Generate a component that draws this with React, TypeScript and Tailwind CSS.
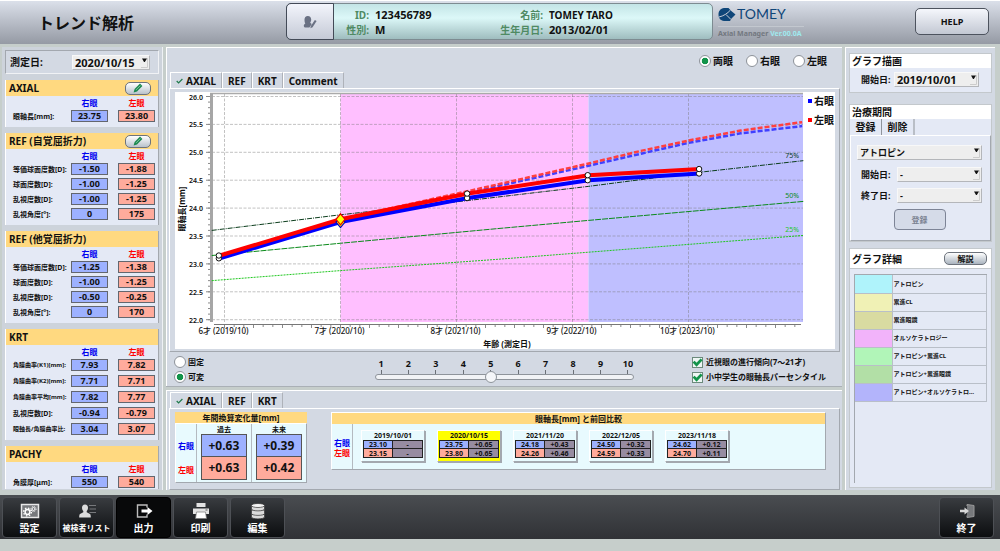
import { ReactNode } from "react";
import clsx from "clsx";

type Measurement = {
  label: string;
  right: string;
  left: string;
  fine?: boolean;
};

type MeasurementGroup = {
  title: string;
  editable?: boolean;
  roomy?: boolean;
  rows: Measurement[];
};

const groups: MeasurementGroup[] = [
  {
    title: "AXIAL",
    editable: true,
    rows: [{ label: "眼軸長[mm]:", right: "23.75", left: "23.80" }],
  },
  {
    title: "REF (自覚屈折力)",
    editable: true,
    rows: [
      { label: "等価球面度数[D]:", right: "-1.50", left: "-1.88" },
      { label: "球面度数[D]:", right: "-1.00", left: "-1.25" },
      { label: "乱視度数[D]:", right: "-1.00", left: "-1.25" },
      { label: "乱視角度[°]:", right: "0", left: "175" },
    ],
  },
  {
    title: "REF (他覚屈折力)",
    rows: [
      { label: "等価球面度数[D]:", right: "-1.25", left: "-1.38" },
      { label: "球面度数[D]:", right: "-1.00", left: "-1.25" },
      { label: "乱視度数[D]:", right: "-0.50", left: "-0.25" },
      { label: "乱視角度[°]:", right: "0", left: "170" },
    ],
  },
  {
    title: "KRT",
    roomy: true,
    rows: [
      { label: "角膜曲率(K1)[mm]:", right: "7.93", left: "7.82", fine: true },
      { label: "角膜曲率(K2)[mm]:", right: "7.71", left: "7.71", fine: true },
      { label: "角膜曲率平均[mm]:", right: "7.82", left: "7.77", fine: true },
      { label: "乱視度数[D]:", right: "-0.94", left: "-0.79" },
      { label: "眼軸長/角膜曲率比:", right: "3.04", left: "3.07", fine: true },
    ],
  },
  {
    title: "PACHY",
    rows: [{ label: "角膜厚[μm]:", right: "550", left: "540" }],
  },
];

const visits = [
  { date: "2019/10/01", age: 5.96, right: 23.1, left: 23.15, dr: "-", dl: "-" },
  { date: "2020/10/15", age: 7, right: 23.75, left: 23.8, dr: "+0.65", dl: "+0.65", current: true },
  { date: "2021/11/20", age: 8.1, right: 24.18, left: 24.26, dr: "+0.43", dl: "+0.46" },
  { date: "2022/12/05", age: 9.14, right: 24.5, left: 24.59, dr: "+0.32", dl: "+0.33" },
  { date: "2023/11/18", age: 10.1, right: 24.62, left: 24.7, dr: "+0.12", dl: "+0.11" },
];

const treatments = [
  { name: "アトロピン", swatch: "bg-[#aff3fb]" },
  { name: "累進CL", swatch: "bg-[#f0f1b5]" },
  { name: "累進眼鏡", swatch: "bg-[#d9dba1]" },
  { name: "オルソケラトロジー", swatch: "bg-[#f2b3fa]" },
  { name: "アトロピン+累進CL", swatch: "bg-[#b1f5b8]" },
  { name: "アトロピン+累進眼鏡", swatch: "bg-[#b2dfa6]" },
  { name: "アトロピン+オルソケラトロ…", swatch: "bg-[#b3b4fb]" },
];

const raised = "border border-t-white border-l-white border-r-[#a3a8af] border-b-[#a3a8af]";

// ---- shared controls ----

const Select = ({
  id,
  value,
  label,
  className,
}: {
  id: string;
  value: string;
  label?: string;
  className?: string;
}) => (
  <div className={clsx("relative", className)}>
    <select
      id={id}
      aria-label={label}
      defaultValue={value}
      className="block h-[15px] w-full appearance-none border border-t-[#f8f8f8] border-l-[#f8f8f8] border-r-[#b4b6ba] border-b-[#b4b6ba] bg-[#eeeeee] pl-[2px] leading-none font-bold"
    >
      <option>{value}</option>
    </select>
    <svg viewBox="0 0 7 12" className="pointer-events-none absolute top-[2px] right-[2px] h-3 w-[7px]">
      <path d="M1 1.5h5L3.8 5H3z" fill="#111" />
      <path d="M0 10.5h6.5V1" fill="none" stroke="#ccc" />
    </svg>
  </div>
);

const Radio = ({ name, label, checked }: { name: string; label: string; checked?: boolean }) => (
  <label className="flex h-3 items-center gap-[2px]">
    <input
      type="radio"
      name={name}
      defaultChecked={checked}
      className="size-3 appearance-none rounded-full border border-[#8d9299] bg-white checked:bg-[radial-gradient(circle_closest-side,#12934a_60%,#ffffff_72%)]"
    />
    {label}
  </label>
);

const Check = ({ label }: { label: string }) => (
  <label className="flex h-3 items-center gap-[3px]">
    <span className="relative size-[11px]">
      <input
        type="checkbox"
        defaultChecked
        className="peer block size-[11px] appearance-none border border-[#6c8a7c] bg-[#eef6f4]"
      />
      <svg viewBox="0 0 11 11" className="pointer-events-none absolute inset-0 hidden peer-checked:block">
        <path d="M1.6 4.6 4.6 7.8 9.6 2.4" fill="none" stroke="#12934a" strokeWidth="2.8" />
      </svg>
    </span>
    {label}
  </label>
);

const Tabs = ({ items }: { items: string[] }) => (
  <div role="tablist" className="flex h-4 pl-[3px] text-[10px]">
    {items.map((item, i) => (
      <button
        key={item}
        role="tab"
        aria-selected={i === 0}
        className={clsx(
          "flex items-center border-t border-l border-t-white border-l-white border-r border-r-[#aeb2b9] bg-[#d3d9e3] px-[5px] pt-px font-bold",
          i === 0 && "gap-[3px]"
        )}
      >
        {i === 0 && (
          <svg viewBox="0 0 7 6" className="h-[6px] w-[7px]">
            <path d="M.7 3 2.6 5 6.4 1" fill="none" stroke="#1f7a4c" strokeWidth="1.2" />
          </svg>
        )}
        {item}
      </button>
    ))}
  </div>
);

// ---- header ----

const Field = ({ label, children, className }: { label: string; children: ReactNode; className?: string }) => (
  <div className={clsx("flex items-center gap-[6px]", className)}>
    <dt className="w-[46px] text-right text-[10px] text-[#4f8a63]">{label}</dt>
    <dd>{children}</dd>
  </div>
);

const Header = () => (
  <header className="flex h-11 items-start border-t border-white bg-linear-to-b from-[#dbe0ea] to-[#959aa4]">
    <h1 className="w-[286px] self-center pl-[38px] text-[16px]">トレンド解析</h1>
    <div className="mt-[2px] flex h-[37px] w-[427px] rounded-[5px] border border-[#7d8b91] bg-linear-to-b from-[#c3e4e6] via-[#dcf8f8] via-40% to-[#9fbdbf]">
      <button
        aria-label="患者情報の編集"
        className="-m-px flex w-12 items-center justify-center rounded-l-[5px] border border-[#434a57] bg-linear-to-b from-[#f3f5fc] to-[#c5cad6]"
      >
        <svg viewBox="0 0 14 14" className="size-[14px]" fill="#6a7183">
          <path d="M4.8 1C7 1 8.200 2.500 8.200 4.600c0 1.500-.4 2.400-1 3.200.5.500 1.200.8 1.600 1.200L6.400 12.600H2.600C1.400 12.600.8 11.800.8 10.800c0-1.100.7-1.700 1.500-2.300C1.700 7.600 1.500 6.200 1.500 4.600 1.500 2.500 2.700 1 4.800 1z" />
          <path d="m11.900 5 1.700 1.100-4 6.100-2.200 1 .4-2.200z" />
        </svg>
      </button>
      <dl className="grid grow grid-cols-[164px_1fr] grid-rows-[15px_15px] content-start pt-[3px] text-[11px]">
        <Field label="ID:" className="-ml-[10px]">123456789</Field>
        <Field label="名前:"><span className="text-[10px]">TOMEY TARO</span></Field>
        <Field label="性別:" className="-ml-[10px]">M</Field>
        <Field label="生年月日:">2013/02/01</Field>
      </dl>
    </div>
    <div className="mt-[5px] ml-[5px] w-[86px]">
      <div className="flex h-[21px] items-center gap-px border-b border-[#c3c8cf] pb-1 text-[#0f4679]">
        <svg viewBox="0 0 18 15" className="h-[15px] w-[18px]">
          <path d="M6 1h4.500l2.800 3L17.500 7.500 13.500 11.500 12 14H6C2.500 13.500.5 11 .5 7.500S2.500 1.500 6 1z" fill="#0f4679" />
          <path d="M1 10C5.500 9 9.500 6.500 12.500 3M8 7.500 13 12.500" fill="none" stroke="#c7ccd6" />
        </svg>
        <span className="font-['Lato','Noto_Sans',sans-serif] text-[14px] font-normal">TOMEY</span>
      </div>
      <p className="pt-[3px] text-[7px] whitespace-nowrap text-[#737880]">
        Axial Manager <span className="text-[#9fe9ee]">Ver.00.0A</span>
      </p>
    </div>
    <button className="mt-[7px] mr-[11px] ml-auto h-[27px] w-[74px] rounded-[5px] border border-[#4d535e] bg-linear-to-b from-[#f5f7fc] to-[#c3c8d3] text-[9px] font-bold">
      HELP
    </button>
  </header>
);

// ---- left column ----

const MeasurementCard = ({ title, editable, roomy, rows }: MeasurementGroup) => (
  <section className={clsx("bg-[#e4e9f5] pb-[5px] last:pb-px", raised, "border-y-0")}>
    <div className="flex h-4 items-center justify-between bg-[#ffd980] pr-[7px] pl-[3px]">
      <h2 className="text-[10px]">{title}</h2>
      {editable && (
        <button
          aria-label={`${title} 編集`}
          className="flex h-[13px] w-[26px] items-center justify-center rounded-[5px] border border-[#6d737c] bg-linear-to-b from-white to-[#b9c2cb]"
        >
          <svg viewBox="0 0 10 10" className="size-[10px]">
            <path d="M.6 9.400 1.600 6 7 .6 9.400 3 4 8.400z" fill="#1d8a50" />
            <path d="M3 6.900 7.300 2.600" stroke="#a9dcbf" strokeWidth=".7" />
          </svg>
        </button>
      )}
    </div>
    <table className="block pr-[3px] pl-[7px]">
      <thead className="block">
        <tr className="grid h-[14px] grid-cols-[1fr_37px_37px] items-center gap-x-[10px] text-[8px]">
          <td />
          <th className="text-[#0000f0]">右眼</th>
          <th className="text-[#ff0000]">左眼</th>
        </tr>
      </thead>
      <tbody className={clsx("grid", roomy ? "gap-1" : "gap-[3px]")}>
        {rows.map((row) => (
          <tr key={row.label} className="grid h-3 grid-cols-[1fr_37px_37px] items-center gap-x-[10px] text-center text-[9px]">
            <th className={clsx("w-0 text-left whitespace-nowrap", row.fine ? "text-[6px]" : "text-[7px]")}>
              {row.label}
            </th>
            <td className="h-3 border border-[#63666e] bg-[#9db1ff] leading-[10px]">{row.right}</td>
            <td className="h-3 border border-[#63666e] bg-[#ffab9c] leading-[10px]">{row.left}</td>
          </tr>
        ))}
      </tbody>
    </table>
  </section>
);

const Sidebar = () => (
  <aside className="flex w-[161px] shrink-0 flex-col gap-[6px] border-r border-r-[#eef1f4] bg-[#cdd3db] px-[3px] pt-[3px] pb-px">
    <div className="flex h-6 items-center border border-t-[#a3a8af] border-r-[#f0f2f5] border-b-[#f0f2f5] border-l-[#a3a8af] bg-[#d3d9e3] pl-1 text-[10px]">
      <label htmlFor="measured" className="w-[62px]">測定日:</label>
      <Select id="measured" value="2020/10/15" className="w-[78px] text-[11px]" />
    </div>
    {groups.map((group) => (
      <MeasurementCard key={group.title} {...group} />
    ))}
  </aside>
);

// ---- chart ----

const PLOT = { left: 37, right: 628, top: 2, bottom: 230 };
const px = (age: number) => 49.5 + (age - 6) * 116;
const py = (mm: number) => 4.5 + (26 - mm) * 55.8;
const line = (points: [number, number][]) => points.map(([a, v]) => `${px(a)},${py(v)}`).join(" ");

const ages = [6, 7, 8, 9, 10];
const lengths = [26, 25.5, 25, 24.5, 24, 23.5, 23, 22.5, 22];
const minorY = Array.from({ length: 41 }, (_, i) => 22 + i / 10);
const minorX = Array.from({ length: 60 }, (_, i) => 6 + i / 12).filter((a) => px(a) < PLOT.right);

const percentiles: { label: string; color: string; dash: string; points: [number, number][] }[] = [
  {
    label: "75%",
    color: "#0b3d1c",
    dash: "5 1 1 1",
    points: [[5.89, 23.6], [7, 23.88], [8.2, 24.16], [9.14, 24.39], [10, 24.62], [10.99, 24.85]],
  },
  {
    label: "50%",
    color: "#0a8a1a",
    dash: "6 1",
    points: [[5.89, 23.15], [7, 23.37], [8.34, 23.63], [9.14, 23.78], [10.99, 24.12]],
  },
  {
    label: "25%",
    color: "#1fc81f",
    dash: "2 1",
    points: [[5.89, 22.7], [7, 22.88], [8.34, 23.08], [9.14, 23.21], [10.99, 23.51]],
  },
];

const forecastRight: [number, number][] = [
  [7, 23.75], [8.2, 24.32], [9.14, 24.76], [9.6, 24.98], [10, 25.17], [10.45, 25.34], [10.98, 25.47],
];
const forecastLeft: [number, number][] = [
  [7, 23.8], [8.2, 24.35], [9.14, 24.8], [9.6, 25.03], [10, 25.21], [10.45, 25.39], [10.98, 25.54],
];

const Chart = () => (
  <svg viewBox="0 0 660 257" className="block w-full bg-white font-bold" fill="#111">
    <rect x={px(7)} y={PLOT.top} width={413.5 - px(7)} height={228} fill="#ffbfff" />
    <rect x={413.5} y={PLOT.top} width={PLOT.right - 413.5} height={228} fill="#bfbfff" />

    <g stroke="#777" strokeOpacity=".45" strokeDasharray="3 1.5">
      {lengths.map((v) => (
        <line key={v} x1={PLOT.left} x2={PLOT.right} y1={py(v)} y2={py(v)} />
      ))}
      {ages.map((a) => (
        <line key={a} x1={px(a)} x2={px(a)} y1={PLOT.top} y2={PLOT.bottom} />
      ))}
    </g>

    <g stroke="#8a8a8a">
      <path d="M35 1.5H628" stroke="#aaa" strokeWidth="1.5" />
      <path d="M36.5 1V230" stroke="#a6a6a6" strokeWidth="3" />
      <path d="M39 232.5H626" stroke="#777" />
      {minorY.map((v) => (
        <line key={v} x1={33} x2={35} y1={py(v)} y2={py(v)} />
      ))}
      {lengths.map((v) => (
        <line key={v} x1={31} x2={35} y1={py(v)} y2={py(v)} />
      ))}
      {minorX.map((a, i) => (
        <line key={a} x1={px(a)} x2={px(a)} y1={233} y2={i % 3 === 0 ? 236 : 235} />
      ))}
    </g>

    <g fontSize="7" textAnchor="end" fontWeight="600">
      {lengths.map((v) => (
        <text key={v} x={28} y={py(v) + 3}>{v.toFixed(1)}</text>
      ))}
    </g>
    <g fontSize="8" textAnchor="middle" fontWeight="500">
      {ages.map((a) => (
        <text key={a} x={px(a) - 1} y={242}>{`${a}才 (${2013 + a}/10)`}</text>
      ))}
    </g>
    <text x={332} y={255} fontSize="8" textAnchor="middle">年齢 (測定日)</text>
    <text transform="translate(10 117) rotate(-90)" fontSize="8" textAnchor="middle">眼軸長[mm]</text>

    {percentiles.map((p) => (
      <g key={p.label}>
        <polyline points={line(p.points)} fill="none" stroke={p.color} strokeDasharray={p.dash} />
        <text
          x={624}
          y={py(p.points[p.points.length - 1][1]) - 3}
          fontSize="7"
          fontWeight="400"
          textAnchor="end"
          fill={p.color}
        >
          {p.label}
        </text>
      </g>
    ))}

    <g fill="none" strokeWidth="2.5" strokeDasharray="5 2">
      <polyline points={line(forecastRight)} stroke="#4040ff" />
      <polyline points={line(forecastLeft)} stroke="#ff4040" />
    </g>
    <g fill="none" strokeWidth="4">
      <polyline points={line(visits.map((v) => [v.age, v.right]))} stroke="#0000ff" />
      <polyline points={line(visits.map((v) => [v.age, v.left]))} stroke="#ff0000" />
    </g>
    {visits.map((v) =>
      v.current ? (
        <g key={v.date} fill="#ffff00" strokeWidth="1.2">
          <path d={`M${px(v.age)} ${py(v.right) - 5.5}l4.5 5.5-4.5 5.5-4.5-5.5z`} stroke="#0000c0" />
          <path d={`M${px(v.age)} ${py(v.left) - 5.5}l4.5 5.5-4.5 5.5-4.5-5.5z`} stroke="#e00000" />
        </g>
      ) : (
        <g key={v.date} fill="#fff" stroke="#111">
          <circle cx={px(v.age) - 1} cy={py(v.right)} r="2.7" />
          <circle cx={px(v.age) - 1} cy={py(v.left)} r="2.7" />
        </g>
      )
    )}

    <rect x={633} y={7} width={4} height={4} fill="#0000ff" />
    <rect x={633} y={26} width={4} height={4} fill="#ff0000" />
    <g fontSize="10">
      <text x={639} y={13}>右眼</text>
      <text x={639} y={32}>左眼</text>
    </g>
  </svg>
);

const ChartPanel = () => (
  <section className="border-t border-l border-white bg-[#d3d9e3] shadow-[0_1px_0_#aab0b6]">
    <div className="mt-[7px] mb-[5px] flex justify-end gap-[13px] pr-[15px] text-[10px]">
      <Radio name="eye" label="両眼" checked />
      <Radio name="eye" label="右眼" />
      <Radio name="eye" label="左眼" />
    </div>
    <Tabs items={["AXIAL", "REF", "KRT", "Comment"]} />
    <div className={clsx("mx-[2px] pt-[3px] pr-1 pb-[2px] pl-[5px]", raised)}>
      <Chart />
    </div>
    <div className="grid grid-cols-[201px_259px_1fr] px-[7px] pt-[4px] pb-[3px] text-[8px]">
      <div className="grid justify-start gap-[3px]">
        <Radio name="axis" label="固定" />
        <Radio name="axis" label="可変" checked />
      </div>
      <div className="pt-[3px]">
        <div className="flex justify-between text-[9px]">
          {Array.from({ length: 10 }, (_, i) => (
            <span key={i} className="flex w-3 flex-col items-center gap-[2px]">
              {i + 1}
              <span className="h-1 w-px bg-[#6b7077]" />
            </span>
          ))}
        </div>
        <input
          type="range"
          aria-label="表示年数"
          min={1}
          max={10}
          defaultValue={5}
          className="-mt-[3px] block h-3 w-full appearance-none bg-transparent [&::-webkit-slider-runnable-track]:h-[6px] [&::-webkit-slider-runnable-track]:rounded-full [&::-webkit-slider-runnable-track]:border [&::-webkit-slider-runnable-track]:border-[#8e949b] [&::-webkit-slider-runnable-track]:bg-[#f1f3f6] [&::-webkit-slider-thumb]:-mt-1 [&::-webkit-slider-thumb]:size-3 [&::-webkit-slider-thumb]:appearance-none [&::-webkit-slider-thumb]:rounded-full [&::-webkit-slider-thumb]:border [&::-webkit-slider-thumb]:border-[#8e949b] [&::-webkit-slider-thumb]:bg-[#f4f6f9]"
        />
      </div>
      <div className="grid justify-start gap-[3px] pl-[58px] whitespace-nowrap">
        <Check label="近視眼の進行傾向(7〜21才)" />
        <Check label="小中学生の眼軸長パーセンタイル" />
      </div>
    </div>
  </section>
);

// ---- comparison tables ----

const YearlyTable = () => (
  <table className={clsx("h-[60px] w-[132px] border-separate border-spacing-0 bg-[#e8fafe] text-center", raised)}>
    <caption className="h-[11px] bg-[#ffd980] text-[8px] leading-[11px]">年間換算変化量[mm]</caption>
    <thead>
      <tr className="h-[10px] text-[7px]">
        <td className="w-[21px] border-r border-[#b4bac0]" />
        <th>過去</th>
        <th className="border-l border-[#b4bac0]">未来</th>
      </tr>
    </thead>
    <tbody className="text-[12px]">
      <tr>
        <th className="border-r border-[#b4bac0] text-[8px] text-[#0000f0]">右眼</th>
        <td className="px-1">
          <div className="h-[23px] border border-[#555] bg-[#9db1ff] leading-[21px]">+0.63</div>
        </td>
        <td className="border-l border-[#b4bac0] px-1">
          <div className="h-[23px] border border-[#555] bg-[#9db1ff] leading-[21px]">+0.39</div>
        </td>
      </tr>
      <tr>
        <th className="border-r border-[#b4bac0] text-[8px] text-[#ff0000]">左眼</th>
        <td className="px-1 pb-[2px]">
          <div className="h-[23px] border border-t-0 border-[#555] bg-[#ffab9c] leading-[22px]">+0.63</div>
        </td>
        <td className="border-l border-[#b4bac0] px-1 pb-[2px]">
          <div className="h-[23px] border border-t-0 border-[#555] bg-[#ffab9c] leading-[22px]">+0.42</div>
        </td>
      </tr>
    </tbody>
  </table>
);

const VisitCard = ({ visit }: { visit: (typeof visits)[number] }) => (
  <table
    className={clsx(
      "h-8 w-16 table-fixed border-separate border-spacing-0 px-px pb-[3px] text-center text-[7px] shadow-[1px_1px_0_#a3a8af]",
      visit.current ? "bg-[#ffff00]" : "bg-[#e8fafe]",
      raised
    )}
  >
    <thead>
      <tr>
        <th colSpan={2} className="h-[9px]">{visit.date}</th>
      </tr>
    </thead>
    <tbody>
      <tr>
        <td className="h-[9px] border border-[#222] bg-[#9db1ff]">{visit.right.toFixed(2)}</td>
        <td className="h-[9px] border border-l-0 border-[#222] bg-[#978ca1]">{visit.dr}</td>
      </tr>
      <tr>
        <td className="h-[9px] border border-t-0 border-[#222] bg-[#ffab9c]">{visit.left.toFixed(2)}</td>
        <td className="h-[9px] border border-t-0 border-l-0 border-[#222] bg-[#978ca1]">{visit.dl}</td>
      </tr>
    </tbody>
  </table>
);

const ComparisonPanel = () => (
  <section className="flex grow flex-col border-t border-l border-white bg-[#d3d9e3] pt-px">
    <Tabs items={["AXIAL", "REF", "KRT"]} />
    <div className={clsx("mx-[2px] flex grow items-start gap-6 pt-[3px] pr-[13px] pl-[5px]", raised)}>
      <YearlyTable />
      <div className={clsx("grow bg-[#e8fafe]", raised)}>
        <h3 className="h-[11px] bg-[#ffd980] text-center text-[8px] leading-[11px]">眼軸長[mm] と前回比較</h3>
        <div className="flex">
          <div className="grid w-[21px] content-start gap-[2px] border-r border-[#b4bac0] pt-[15px] text-center text-[8px]">
            <span className="text-[#0000f0]">右眼</span>
            <span className="text-[#ff0000]">左眼</span>
          </div>
          <div className="flex gap-3 pt-[6px] pb-[7px] pl-[8px]">
            {visits.map((visit) => (
              <VisitCard key={visit.date} visit={visit} />
            ))}
          </div>
        </div>
      </div>
    </div>
  </section>
);

// ---- right column ----

const SettingsColumn = () => (
  <aside className="flex w-[150px] shrink-0 flex-col border-t border-l border-white bg-[#d3d9e3] px-[3px] pt-[5px] pb-[2px]">
    <section className="border border-[#c3c8cc] bg-[#e4e9f5]">
      <h2 className="h-[14px] bg-white pl-[2px] text-[10px] leading-[14px]">グラフ描画</h2>
      <div className="flex items-center pt-[4px] pr-3 pb-[5px] pl-[11px] text-[9px]">
        <label htmlFor="graph-start" className="w-[33px]">開始日:</label>
        <Select id="graph-start" value="2019/10/01" className="grow text-[11px]" />
      </div>
    </section>

    <section className="mt-[11px] border border-[#c3c8cc] bg-[#e4e9f5]">
      <h2 className="h-[14px] bg-white pl-[2px] text-[10px] leading-[14px]">治療期間</h2>
      <div role="tablist" className="flex h-4 text-[10px]">
        <button role="tab" aria-selected className="w-8 border-r border-[#8f949b] font-bold">登録</button>
        <button role="tab" aria-selected={false} className="w-[33px] border-r-2 border-[#b9bec6] font-bold">削除</button>
      </div>
      <div className={clsx("pt-[9px] pr-2 pb-[10px] pl-[6px] text-[9px]", raised)}>
        <Select id="treatment" label="治療" value="アトロピン" />
        <div className="mt-[7px] flex items-center pl-1">
          <label htmlFor="start" className="w-9">開始日:</label>
          <Select id="start" value="-" className="grow" />
        </div>
        <div className="mt-[6px] flex items-center pl-1">
          <label htmlFor="end" className="w-9">終了日:</label>
          <Select id="end" value="-" className="grow" />
        </div>
        <button
          disabled
          className="mx-auto mt-[6px] block h-[21px] w-[52px] rounded-[4px] border border-[#7d8496] bg-[#d5dbe8] text-[8px] font-bold text-[#7b8291]"
        >
          登録
        </button>
      </div>
    </section>

    <section className="mt-[6px] flex grow flex-col border border-[#c3c8cc] bg-[#e4e9f5]">
      <div className="flex h-[20px] items-center justify-between border-b border-[#c3c8cc] bg-white pr-1 pl-[2px]">
        <h2 className="text-[10px]">グラフ詳細</h2>
        <button className="h-[13px] w-[43px] rounded-[5px] border border-[#6d737c] bg-linear-to-b from-white to-[#aab4bf] text-[8px] font-bold">
          解説
        </button>
      </div>
      <div className="mx-1 mt-[5px] mb-[4px] grow border-t border-l border-[#a3a8af]">
        <table className="w-full border-collapse text-left text-[6px]">
          <tbody>
            {treatments.map((t) => (
              <tr key={t.name} className="h-[18px] border-r border-b border-[#b9bfc8]">
                <td className={clsx("w-[37px] border-r border-[#b9bfc8]", t.swatch)} />
                <th className="pl-px whitespace-nowrap">{t.name}</th>
              </tr>
            ))}
          </tbody>
        </table>
      </div>
    </section>
  </aside>
);

// ---- bottom toolbar ----

const icons = {
  settings: (
    <>
      <rect x="1.5" y="1.5" width="17" height="13" fill="#77797c" stroke="#e8e8e8" strokeWidth="1.5" />
      <circle cx="7.5" cy="9" r="2.4" fill="none" stroke="#fff" strokeWidth="1.5" />
      <circle cx="7.5" cy="9" r="3.9" fill="none" stroke="#fff" strokeWidth="1.4" strokeDasharray="1.500 1.560" />
      <circle cx="13.5" cy="6" r="1.5" fill="none" stroke="#fff" />
      <circle cx="13.5" cy="6" r="2.6" fill="none" stroke="#fff" strokeDasharray="1 1.040" />
    </>
  ),
  list: (
    <>
      <path
        d="M8 1.5c2 0 3 1.500 3 3.300 0 1.400-.6 2.500-1.300 3.200v1.300L13 11c.7.500.8 2 .8 3.500H2.200c0-1.500.1-3 .8-3.500l3.300-1.700V8C5.600 7.300 5 6.200 5 4.800 5 3 6 1.500 8 1.500z"
        fill="#dcdcdc"
      />
      <path d="M12 2.5h7M12.5 6h6.500M12.5 9.5h6.500" stroke="#77797c" />
    </>
  ),
  output: (
    <>
      <path d="M13 4.500V2H3.500v12H13v-2.500" fill="none" stroke="#bdbdbd" strokeWidth="1.4" />
      <path d="M7.500 6.500h6V4l5 4-5 4V9.500h-6z" fill="#fff" />
    </>
  ),
  print: (
    <>
      <path d="M5.500 0h9v4h-9zM2 5.500h16V11H2z" fill="#e3e3e3" />
      <path d="M5.500 9h9l1 6.500H4.500z" fill="#fff" stroke="#777" strokeWidth=".7" />
      <path d="M14.500 7h2" stroke="#555" />
    </>
  ),
  edit: (
    <g fill="#dadada" stroke="#333" strokeWidth=".7">
      <path d="M3.500 11.500V14c0 2.500 13 2.500 13 0v-2.500z" />
      <path d="M3.500 7v3.500c0 2.500 13 2.500 13 0V7z" />
      <path d="M3.500 2.500V6c0 2.500 13 2.500 13 0V2.500z" />
      <ellipse cx="10" cy="2.5" rx="6.5" ry="2" fill="#f4f4f4" />
    </g>
  ),
  exit: (
    <>
      <path d="M10 3V1.500l7 1v11l-7 1V12.500" fill="#77797c" stroke="#999" />
      <path d="M3 6.800h4.500V4.500L12 8l-4.500 3.500V9.200H3z" fill="#d8d8d8" />
    </>
  ),
};

const ToolButton = ({
  icon,
  label,
  active,
  small,
}: {
  icon: keyof typeof icons;
  label: string;
  active?: boolean;
  small?: boolean;
}) => (
  <button
    className={clsx(
      "flex h-[41px] w-[55px] flex-col items-center justify-between rounded-[4px] border pt-[5px] pb-1 font-bold text-white",
      active ? "border-black bg-[#08090a]" : "border-[#4d5055] bg-linear-to-b from-[#393c40] to-[#0c0e10]"
    )}
  >
    <svg viewBox="0 0 20 16" className="h-4 w-5">{icons[icon]}</svg>
    <span className={clsx("flex h-[10px] items-center whitespace-nowrap", small ? "text-[8px]" : "text-[10px]")}>
      {label}
    </span>
  </button>
);

const App = () => {
  return (
    <div className="min-h-screen bg-[#c6cecb] font-['Noto_Sans','Noto_Sans_CJK_JP',sans-serif] leading-none font-bold text-[#111]">
      <Header />
      <main className="flex gap-[3px] pt-[3px] pr-[5px] pb-[5px] pl-[2px]">
        <Sidebar />
        <div className="flex min-w-0 grow flex-col gap-1">
          <ChartPanel />
          <ComparisonPanel />
        </div>
        <SettingsColumn />
      </main>
      <nav className="flex h-11 items-center gap-[2px] bg-linear-to-b from-[#4a4d51] to-[#303236] pr-[6px] pl-[2px]">
        <ToolButton icon="settings" label="設定" />
        <ToolButton icon="list" label="被検者リスト" small />
        <ToolButton icon="output" label="出力" active />
        <ToolButton icon="print" label="印刷" />
        <ToolButton icon="edit" label="編集" />
        <div className="ml-auto">
          <ToolButton icon="exit" label="終了" />
        </div>
      </nav>
    </div>
  );
};

export default App;
